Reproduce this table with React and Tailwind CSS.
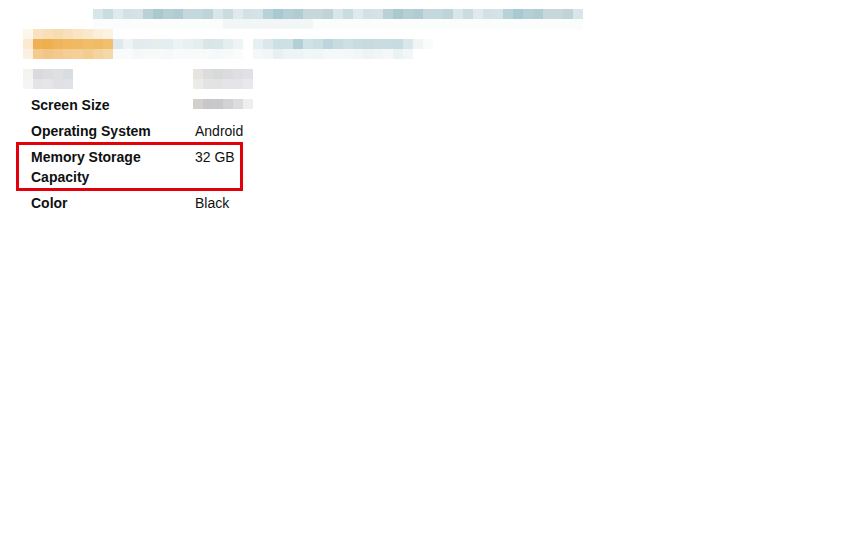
import React from 'react';

// pixelated (blurred-out) strip, one row of 10px cells per array
function Mosaic({ rows, className = '' }) {
  return (
    <div className={`flex flex-col shrink-0 ${className}`}>
      {rows.map((row, i) => (
        <div key={i} className="flex">
          {row.map((c, j) => (
            <div key={j} className="w-[10px] h-[10px]" style={{ backgroundColor: c }} />
          ))}
        </div>
      ))}
    </div>
  );
}

const blues = ['#d9e6e9', '#b9d2d8', '#c3d9de', '#d2e1e4', '#b0cbd1', '#c9dde1', '#a9c9d1', '#bfd4d9', '#d5e3e6', '#c6d8dc', '#e0eaec', '#b5cfd5'];
const pick = (n, off) => Array.from({ length: n }, (_, i) => blues[(i * 5 + off) % blues.length]);

const titleRows = [
  pick(49, 0),
  Array.from({ length: 49 }, (_, i) => (i > 12 && i < 22 ? '#f2f6f7' : '#fbfcfc')),
];

const orange = [
  ['#fdf6ec', '#f9e2c0', '#f8dfb8', '#f7dcb2', '#f8e0bc', '#f9e4c5', '#fae8cd', '#fbeedb', '#fcf2e4'],
  ['#fbe9d0', '#efb155', '#eeb04f', '#efb55c', '#f0b85f', '#f0ba64', '#f1bd6a', '#f0bb66', '#f1bf6e'],
  ['#fcf1e1', '#f3cb8d', '#f2c684', '#f3ca8b', '#f4ce94', '#f4cf96', '#f3cc90', '#f5d39e', '#f6d7a6'],
];

const link1 = [
  ['#dde9ec', '#eef3f4', '#e3eced', '#e4ecee', '#e7edeb', '#e3eef2', '#edf3f4', '#e9f0f1', '#e5eeef', '#d8e6e9', '#dae6e8', '#e4edef', '#eef3f4'],
  ['#f8fafb', '#f9fbfb', '#f5f8f9', '#f7f9fa', '#f8fafa', '#f6f9fa', '#f9fbfb', '#f7f9fa', '#f9fbfb', '#f7fafa', '#f6f9f9', '#f8fafa', '#fafbfb'],
];
const link2 = [
  ['#e6eff1', '#dbe8eb', '#cde0e4', '#cde1e5', '#b3d0d6', '#cfe2e6', '#cbdfe0', '#bdd6dd', '#c8dcdf', '#cde0e3', '#c9dde0', '#c6dadf', '#cadcde', '#c8dde2', '#c7dbe0', '#d9e7ea', '#f1f4f4', '#fafbfb'],
  ['#f4f8f9', '#f1f6f7', '#e6eff1', '#eef4f5', '#eef4f5', '#f1f6f7', '#f0f5f6', '#f4f8f9', '#f6f9fa', '#f4f8f8', '#f1f6f7', '#eef4f5', '#f0f5f6', '#f4f8f9', '#ebf2f3', '#f2f6f7', '#ffffff', '#ffffff'],
];

const gray1 = [
  ['#f5f3f0', '#d9d9de', '#dcdde0', '#dfe0e2', '#d8dde1'],
  ['#f6f5f4', '#e4e4e6', '#e6e6e8', '#e1e1e3', '#dfe3e6'],
];
const gray2 = [
  ['#e7e3df', '#dcdcdf', '#d6dad6', '#dcdcdf', '#dfdee3', '#e2e0e6'],
  ['#ecebe8', '#e3e3e5', '#e2e4e2', '#e5e5e7', '#e6e4e9', '#eae7ef'],
];
const gray3 = [
  ['#d3cfcc', '#c8c6c8', '#c9c8cc', '#d2d1d5', '#dcdcdf', '#eeeef0'],
];

const specs = [
  { label: 'Operating System', value: 'Android' },
  { label: 'Memory Storage Capacity', value: '32 GB', boxed: true },
  { label: 'Color', value: 'Black' },
];

function App() {
  return (
    <div className="w-[864px] h-[540px] bg-white text-[#0f1111] font-['Liberation_Sans',Arial,sans-serif] text-[14px] overflow-hidden">
      <Mosaic rows={titleRows} className="ml-[93px] mt-[9px]" />
      <div className="flex ml-[23px]">
        <Mosaic rows={orange} />
        <Mosaic rows={link1} className="mt-[10px]" />
        <Mosaic rows={link2} className="mt-[10px] ml-[10px]" />
      </div>
      <div className="flex ml-[23px] mt-[10px]">
        <Mosaic rows={gray1} className="w-[170px]" />
        <Mosaic rows={gray2} />
      </div>

      <div className="flex flex-col ml-[16px] mt-[3px] w-[227px]">
        <div className="flex px-[15px] py-[3px] leading-[20px]">
          <div className="w-[164px] shrink-0 font-bold">Screen Size</div>
          <Mosaic rows={gray3} className="mt-[4px] -ml-[2px]" />
        </div>
        {specs.map((s) =>
          s.boxed ? (
            <div key={s.label} className="border-[3px] border-[#e3000b] flex px-[12px] pt-[2px] pb-[1px] -mt-[2px] -mb-[1px] leading-[20px]">
              <div className="w-[164px] shrink-0 font-bold pr-[30px]">{s.label}</div>
              <div className="whitespace-nowrap">{s.value}</div>
            </div>
          ) : (
            <div key={s.label} className="flex px-[15px] py-[3px] leading-[20px]">
              <div className="w-[164px] shrink-0 font-bold">{s.label}</div>
              <div className="whitespace-nowrap">{s.value}</div>
            </div>
          )
        )}
      </div>
    </div>
  );
}

export default App;
